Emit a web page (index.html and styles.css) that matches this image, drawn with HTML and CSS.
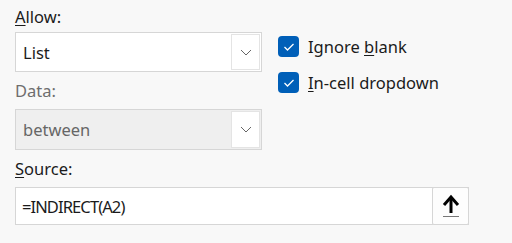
FILE: index.html
```html
<!DOCTYPE html>
<html lang="en">
<head>
    <meta charset="UTF-8">
    <title>Data Validation</title>
    <link rel="stylesheet" href="styles.css">
</head>
<body>

<div class="dialog">
    <div class="top">
        <div class="fields">
            <div class="label first"><u>A</u>llow:</div>
            <div class="select">
                <span class="value">List</span>
                <span class="drop">
                    <svg width="12" height="7" viewBox="0 0 12 7"><path d="M1 1 L6 6 L11 1" fill="none" stroke="#666" stroke-width="1"/></svg>
                </span>
            </div>

            <div class="label muted">Data:</div>
            <div class="select disabled">
                <span class="value">between</span>
                <span class="drop">
                    <svg width="12" height="7" viewBox="0 0 12 7"><path d="M1 1 L6 6 L11 1" fill="none" stroke="#666" stroke-width="1"/></svg>
                </span>
            </div>
        </div>

        <div class="options">
            <div class="check">
                <span class="box">
                    <svg width="12" height="10" viewBox="0 0 12 10"><path d="M1.5 5 L4.5 8 L10.5 2" fill="none" stroke="#fff" stroke-width="1.3"/></svg>
                </span>
                <span>Ignore <u>b</u>lank</span>
            </div>
            <div class="check">
                <span class="box">
                    <svg width="12" height="10" viewBox="0 0 12 10"><path d="M1.5 5 L4.5 8 L10.5 2" fill="none" stroke="#fff" stroke-width="1.3"/></svg>
                </span>
                <span><u>I</u>n-cell dropdown</span>
            </div>
        </div>
    </div>

    <div class="label"><u>S</u>ource:</div>
    <div class="source">
        <span class="value formula">=INDIRECT(A2)</span>
        <span class="pick">
            <svg width="18" height="24" viewBox="0 0 18 24">
                <path d="M9 4 V19" stroke="#000" stroke-width="3"/>
                <path d="M2 11 L9 3 L16 11" fill="none" stroke="#000" stroke-width="3"/>
                <path d="M1 22.5 H17" stroke="#777" stroke-width="1"/>
            </svg>
        </span>
    </div>
</div>

</body>
</html>
```

FILE: styles.css
```css
/* Dialog de validação */
body {
    margin: 0;
    background-color: #f8f8f8;
    font-family: "Noto Sans", "Open Sans", sans-serif;
    font-size: 16.5px;
    color: #1b1b1b;
}
.dialog {
    padding-left: 15px;
}
.top {
    display: flex;
    gap: 16px;
}
.fields {
    width: 247px;
}
.label {
    height: 37px;
    line-height: 22px;
    display: flex;
    align-items: center;
}
.label.first {
    height: 32px;
    padding-top: 2px;
    box-sizing: border-box;
}
.muted {
    color: #6e6e6e;
}
u {
    text-underline-offset: 2px;
}
.select {
    height: 40px;
    box-sizing: border-box;
    border: 1px solid #d6d6d6;
    background-color: #fff;
    display: flex;
    align-items: center;
    justify-content: space-between;
    padding: 1px;
}
.select .value {
    padding-left: 6px;
}
.select.disabled {
    height: 41px;
    background-color: #efefef;
    color: #666;
}
.drop {
    width: 29px;
    height: 100%;
    box-sizing: border-box;
    border: 1px solid #e4e4e4;
    background-color: #fff;
    display: flex;
    align-items: center;
    justify-content: center;
}
.options {
    padding-top: 36px;
    display: flex;
    flex-direction: column;
    gap: 15px;
}
.check {
    display: flex;
    align-items: center;
    gap: 9px;
    height: 21px;
}
.box {
    width: 21px;
    height: 21px;
    border-radius: 4px;
    background-color: #005fb8;
    display: flex;
    align-items: center;
    justify-content: center;
}
.source {
    width: 454px;
    height: 38px;
    box-sizing: border-box;
    border: 1px solid #d6d6d6;
    background-color: #fff;
    display: flex;
    align-items: center;
    justify-content: space-between;
}
.source .value {
    padding-left: 6px;
}
.formula {
    letter-spacing: -0.9px;
}
.pick {
    width: 37px;
    height: 38px;
    margin-right: -1px;
    box-sizing: border-box;
    border: 1px solid #d6d6d6;
    border-radius: 2px;
    background-color: #fdfdfd;
    display: flex;
    align-items: center;
    justify-content: center;
}
```
